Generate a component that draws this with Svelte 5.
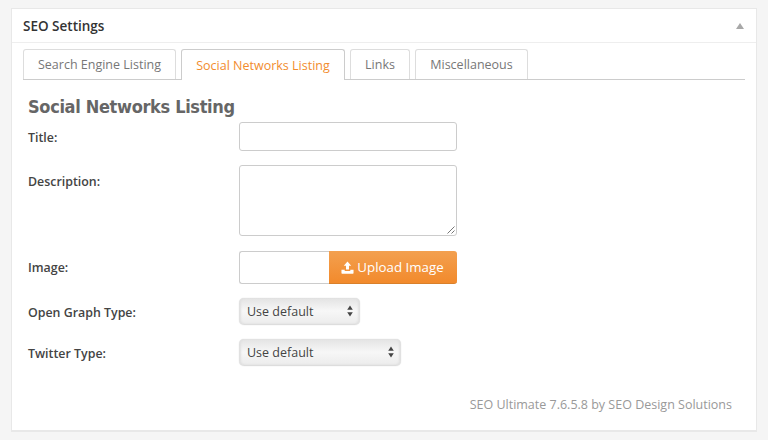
<script>
  const tabs = ['Search Engine Listing', 'Social Networks Listing', 'Links', 'Miscellaneous']
  const active = 'Social Networks Listing'
</script>

<div class="page">
  <section class="panel">
    <header class="panel__head">
      <h2>SEO Settings</h2>
      <span class="panel__toggle"></span>
    </header>

    <div class="panel__body">
      <nav class="tabs">
        {#each tabs as tab}
          <button type="button" class="tab" class:tab--active={tab === active}>{tab}</button>
        {/each}
      </nav>

      <h3>Social Networks Listing</h3>

      <div class="form">
        <label class="row">
          <span class="label">Title:</span>
          <input class="field" type="text" />
        </label>

        <label class="row row--desc">
          <span class="label label--desc">Description:</span>
          <span class="area">
            <span class="grip">
              <svg viewBox="0 0 8 8" width="8" height="8" aria-hidden="true">
                <path d="M0.5 7.5 7.5 0.5M4.5 7.5 7.5 4.5" stroke="#777" stroke-width="1" fill="none" />
              </svg>
            </span>
          </span>
        </label>

        <div class="row row--image">
          <span class="label">Image:</span>
          <div class="upload">
            <input class="upload__input" type="text" />
            <button type="button" class="upload__btn">
              <svg viewBox="0 0 14 14" width="13" height="13" aria-hidden="true">
                <path d="M7 0.5 11 5H8.6v4.2H5.4V5H3z" fill="#fff" />
                <path d="M0.5 9.5H4v1.2h6V9.5h3.5V13a.6.6 0 0 1-.6.6H1.1a.6.6 0 0 1-.6-.6z" fill="#fff" />
              </svg>
              Upload Image
            </button>
          </div>
        </div>

        <div class="row row--og">
          <span class="label">Open Graph Type:</span>
          <div class="select select--short">
            <span>Use default</span>
            <svg viewBox="0 0 6 12" width="6" height="12" aria-hidden="true">
              <path d="M3 0.5 5.8 4.8H0.2zM3 11.5 0.2 7.2h5.6z" fill="#444" />
            </svg>
          </div>
        </div>

        <div class="row row--tw">
          <span class="label">Twitter Type:</span>
          <div class="select select--long">
            <span>Use default</span>
            <svg viewBox="0 0 6 12" width="6" height="12" aria-hidden="true">
              <path d="M3 0.5 5.8 4.8H0.2zM3 11.5 0.2 7.2h5.6z" fill="#444" />
            </svg>
          </div>
        </div>
      </div>

      <p class="credit">SEO Ultimate 7.6.5.8 by SEO Design Solutions</p>
    </div>
  </section>
</div>

<style>
  :global(body) {
    margin: 0;
    background: #f5f5f5;
  }

  .page {
    width: 768px;
    height: 440px;
    padding: 8px 11px 0 11px;
    box-sizing: border-box;
    overflow: hidden;
    font-family: 'Open Sans', 'Liberation Sans', sans-serif;
    color: #444;
  }

  .panel {
    height: 424px;
    box-sizing: border-box;
    background: #fff;
    border: 1px solid #e8e8e8;
    border-width: 1px 1px 2px 1px;
  }

  .panel__head {
    height: 33px;
    display: flex;
    align-items: center;
    justify-content: space-between;
    padding: 0 12px 0 11px;
    border-bottom: 1px solid #eee;
  }

  h2 {
    margin: 0;
    font-size: 13.5px;
    font-weight: 600;
    color: #333;
  }

  .panel__toggle {
    width: 0;
    height: 0;
    border-left: 4px solid transparent;
    border-right: 4px solid transparent;
    border-bottom: 6px solid #a8a8a8;
  }

  .panel__body {
    padding: 6px 11px 0;
  }

  .tabs {
    display: flex;
    gap: 5px;
    height: 31px;
    box-sizing: border-box;
    border-bottom: 1px solid #ccc;
  }

  .tab {
    height: 30px;
    padding: 0;
    box-sizing: border-box;
    border: 1px solid #ddd;
    border-bottom: 0;
    border-radius: 3px 3px 0 0;
    background: #fff;
    font: 400 12.5px 'Open Sans', sans-serif;
    color: #777;
    width: 153px;
  }

  .tab:nth-child(2) { width: 164px; }
  .tab:nth-child(3) { width: 60px; }
  .tab:nth-child(4) { width: 113px; }

  .tab--active {
    height: 31px;
    color: #f28c2e;
    border-color: #ccc;
  }

  h3 {
    margin: 15px 0 0 5px;
    font: 700 18px/24px 'DejaVu Sans Condensed', 'DejaVu Sans', sans-serif;
    font-stretch: condensed;
    letter-spacing: -0.33px;
    color: #666;
  }

  .form {
    margin-top: 3px;
  }

  .row {
    display: flex;
    align-items: center;
    padding-left: 5px;
  }

  .label {
    width: 211px;
    padding-top: 2px;
    font-size: 12.4px;
    font-weight: 600;
    color: #444;
    flex: none;
  }

  .row--desc {
    align-items: flex-start;
    margin-top: 14px;
  }

  .label--desc {
    padding-top: 0;
    line-height: 33px;
  }

  .row--image { margin-top: 15px; }
  .row--image .label { padding-top: 0; }
  .row--og { margin-top: 14px; }
  .row--tw { margin-top: 14px; }

  .field {
    width: 218px;
    height: 29px;
    box-sizing: border-box;
    margin: 0;
    padding: 0;
    border: 1px solid #ccc;
    border-radius: 3px;
    background: #fff;
    outline: none;
  }

  .area {
    position: relative;
    display: block;
    width: 218px;
    height: 71px;
    box-sizing: border-box;
    border: 1px solid #ccc;
    border-radius: 3px;
  }

  .grip {
    position: absolute;
    right: 1px;
    bottom: 1px;
    line-height: 0;
  }

  .upload {
    display: flex;
    width: 218px;
    height: 33px;
  }

  .upload__input {
    width: 90px;
    box-sizing: border-box;
    margin: 0;
    padding: 0;
    border: 1px solid #ccc;
    border-right: 0;
    border-radius: 3px 0 0 3px;
    outline: none;
  }

  .upload__btn {
    display: flex;
    align-items: center;
    justify-content: center;
    gap: 3px;
    width: 128px;
    padding: 0 1px 0 0;
    border: 0;
    border-bottom: 1px solid #d9802b;
    border-radius: 0 3px 3px 0;
    background: linear-gradient(#f3a04f, #f28a2c);
    color: #fff;
    font: 400 13.3px 'Open Sans', sans-serif;
  }

  .select {
    display: flex;
    align-items: center;
    justify-content: space-between;
    height: 27px;
    box-sizing: border-box;
    padding: 0 7px 0 8px;
    border-radius: 5px;
    border-bottom: 1px solid #ddd;
    background: linear-gradient(#e3e3e3, #f7f7f7 50%, #ececec);
    box-shadow: inset 2px 0 2px #e0e0e0, inset -2px 0 2px #e0e0e0, 0 0 1px #ccc;
    font-size: 12.5px;
    color: #444;
  }

  .select--short { width: 121px; }
  .select--long { width: 162px; }

  .credit {
    margin: 30px 13px 0 0;
    text-align: right;
    font-size: 12.5px;
    color: #999;
  }
</style>
